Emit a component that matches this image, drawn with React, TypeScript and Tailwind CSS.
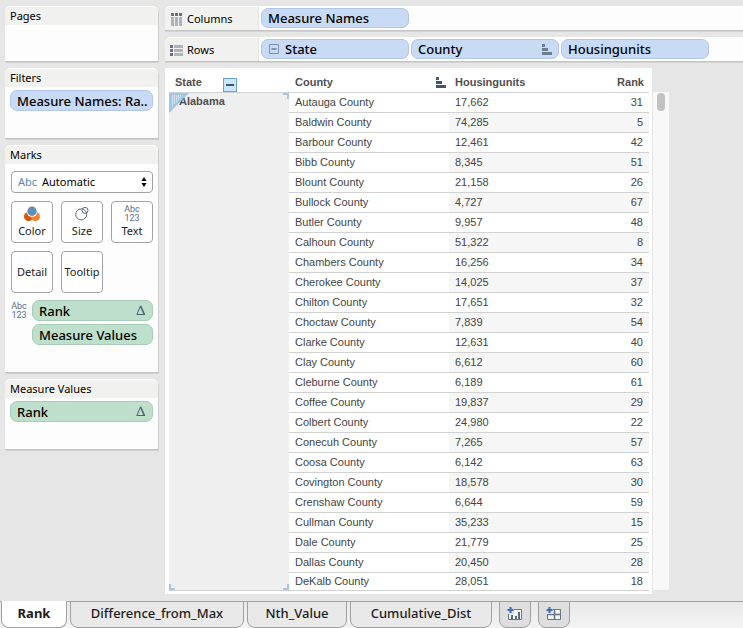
import React from "react";

const counties: [string, string, number][] = [
  ["Autauga County", "17,662", 31],
  ["Baldwin County", "74,285", 5],
  ["Barbour County", "12,461", 42],
  ["Bibb County", "8,345", 51],
  ["Blount County", "21,158", 26],
  ["Bullock County", "4,727", 67],
  ["Butler County", "9,957", 48],
  ["Calhoun County", "51,322", 8],
  ["Chambers County", "16,256", 34],
  ["Cherokee County", "14,025", 37],
  ["Chilton County", "17,651", 32],
  ["Choctaw County", "7,839", 54],
  ["Clarke County", "12,631", 40],
  ["Clay County", "6,612", 60],
  ["Cleburne County", "6,189", 61],
  ["Coffee County", "19,837", 29],
  ["Colbert County", "24,980", 22],
  ["Conecuh County", "7,265", 57],
  ["Coosa County", "6,142", 63],
  ["Covington County", "18,578", 30],
  ["Crenshaw County", "6,644", 59],
  ["Cullman County", "35,233", 15],
  ["Dale County", "21,779", 25],
  ["Dallas County", "20,450", 28],
  ["DeKalb County", "28,051", 18],
];

function SortIcon({ className }: { className: string }) {
  return (
    <svg width="10" height="11" viewBox="0 0 10 11" className={className} fill="currentColor" aria-hidden="true">
      <path d="M0 0h3v3H0zM0 4h6v3H0zM0 8h10v3H0z" />
    </svg>
  );
}

function Delta() {
  return (
    <svg width="10" height="11" viewBox="0 0 10 11" className="shrink-0 text-[#4f6076]" aria-hidden="true">
      <path d="M4.500 1 .8 9.500h8" fill="none" stroke="currentColor" strokeWidth="1" />
      <path d="M4.500 .8l4 9" stroke="currentColor" strokeWidth="1.600" />
    </svg>
  );
}

function Pill({ tone, className, children }: { tone: "blue" | "green"; className: string; children: React.ReactNode }) {
  const colors = tone === "blue" ? "bg-[#c8daf4] border-[#b0c7e8]" : "bg-[#bddfcb] border-[#a9ccb8]";
  return (
    <button
      type="button"
      className={`flex items-center rounded-[7px] border px-[6px] text-left text-[13px] font-medium leading-[18px] whitespace-nowrap text-black ${colors} ${className}`}
    >
      {children}
    </button>
  );
}

function Card({ title, className, children }: { title: string; className: string; children?: React.ReactNode }) {
  return (
    <section className={`rounded-t-[6px] border-b border-[#c4c4c4] bg-[#fdfdfd] shadow-[1px_1px_0_#cfcfcf] ${className}`}>
      <h2 className="h-[19px] rounded-t-[6px] border-t border-white bg-[#f1f1ef] px-[5px] text-[11px] leading-[18px] text-black">
        {title}
      </h2>
      {children}
    </section>
  );
}

function Shelf({ label, icon, children }: { label: string; icon: React.ReactNode; children: React.ReactNode }) {
  return (
    <section className="flex h-[25px] rounded-tl-[6px] border-b border-[#c4c4c4] bg-[#fdfdfd] shadow-[0_1px_0_#d4d4d4]">
      <h2 className="flex w-[94px] shrink-0 items-center gap-1 rounded-tl-[6px] border-t border-r border-t-white border-r-[#e4e4e2] bg-[#f1f1ef] pt-px pl-[5px] text-[11px] text-black">
        {icon}
        {label}
      </h2>
      <div className="flex min-w-0 items-center gap-[2px] pl-[2px]">{children}</div>
    </section>
  );
}

function MarkButton({ label, children }: { label: string; children?: React.ReactNode }) {
  return (
    <button
      type="button"
      className="flex h-[42px] w-[42px] flex-col items-center justify-center rounded-[4px] border border-[#a3a3a3] bg-white text-[11px] leading-[16px] text-[#222]"
    >
      {children}
      {label}
    </button>
  );
}

function Abc123() {
  return (
    <span className="flex w-4 flex-col items-center font-['Roboto',sans-serif] text-[9px] leading-[9px] text-[#5c6b82]">
      <span>Abc</span>
      <span>123</span>
    </span>
  );
}

const tabBase =
  "h-[27px] rounded-b-[8px] border border-[#a0a0a0] pb-[2px] text-[13px] leading-[23px] text-[#1c1c1c] whitespace-nowrap";

export default function App() {
  return (
    <div className="flex min-h-screen flex-col bg-[#e6e6e6] font-['Noto_Sans',sans-serif]">
      <div className="flex flex-1 gap-[7px] pt-[6px] pl-[5px]">
        <aside className="flex w-[153px] shrink-0 flex-col gap-[6px]">
          <Card title="Pages" className="h-14" />

          <Card title="Filters" className="h-[71px]">
            <div className="px-[5px] pt-[3px]">
              <Pill tone="blue" className="h-[21px] w-full">Measure Names: Ra..</Pill>
            </div>
          </Card>

          <Card title="Marks" className="h-[228px]">
            <div className="flex flex-col gap-2 pt-[7px] pr-[5px] pl-[6px]">
              <div className="relative flex">
                <select
                  aria-label="Mark type"
                  className="h-[22px] w-full appearance-none rounded-[4px] border border-[#a3a3a3] bg-white pl-[30px] text-[11px] leading-[20px] text-black"
                >
                  <option>Automatic</option>
                </select>
                <span className="pointer-events-none absolute inset-y-0 left-[7px] text-[11px] leading-[22px] text-[#5b87a8]">Abc</span>
                <svg width="6" height="10" viewBox="0 0 6 10" className="pointer-events-none absolute top-[6px] right-[6px]" aria-hidden="true">
                  <path d="M3 0l2.600 4H.4zM3 10L.4 6h5.200z" />
                </svg>
              </div>
              <div className="grid grid-cols-[42px_42px_42px] gap-2">
                <MarkButton label="Color">
                  <svg width="16" height="16" viewBox="0 0 16 16" className="mb-[1px]" aria-hidden="true">
                    <circle cx="4.600" cy="10.600" r="4.600" fill="#d4580f" />
                    <circle cx="11.400" cy="10.600" r="4.600" fill="#f58231" />
                    <circle cx="8" cy="5.200" r="5.600" fill="#fff" />
                    <circle cx="8" cy="5.200" r="4.700" fill="#5f8fb4" />
                  </svg>
                </MarkButton>
                <MarkButton label="Size">
                  <svg width="16" height="16" viewBox="0 0 16 16" className="mb-[1px]" fill="none" stroke="#596a82" aria-hidden="true">
                    <circle cx="7.200" cy="8.400" r="5.500" />
                    <circle cx="11" cy="4.400" r="3" />
                  </svg>
                </MarkButton>
                <MarkButton label="Text">
                  <Abc123 />
                </MarkButton>
                <MarkButton label="Detail" />
                <MarkButton label="Tooltip" />
              </div>
              <div className="-mt-px flex gap-[5px]">
                <span className="pt-[2px]"><Abc123 /></span>
                <div className="flex flex-1 flex-col gap-[3px]">
                  <Pill tone="green" className="h-[21px] w-full justify-between">Rank<Delta /></Pill>
                  <Pill tone="green" className="h-[21px] w-full">Measure Values</Pill>
                </div>
              </div>
            </div>
          </Card>

          <Card title="Measure Values" className="h-[71px]">
            <div className="px-[5px] pt-[3px]">
              <Pill tone="green" className="h-[21px] w-full justify-between">Rank<Delta /></Pill>
            </div>
          </Card>
        </aside>

        <main className="flex min-w-0 flex-1 flex-col gap-[6px]">
          <Shelf
            label="Columns"
            icon={
              <svg width="13" height="13" viewBox="0 0 13 13" aria-hidden="true">
                <path d="M1 0h3v3H1zM5 0h3v3H5zM9 0h3v3H9z" fill="#66727f" />
                <path d="M1 4h3v9H1zM5 4h3v9H5zM9 4h3v9H9z" fill="#adb3ba" />
              </svg>
            }
          >
            <Pill tone="blue" className="h-5 w-[148px]">Measure Names</Pill>
          </Shelf>
          <Shelf
            label="Rows"
            icon={
              <svg width="13" height="13" viewBox="0 0 13 13" aria-hidden="true">
                <path d="M0 1h3v3H0zM0 5h3v3H0zM0 9h3v3H0z" fill="#66727f" />
                <path d="M4 1h9v3H4zM4 5h9v3H4zM4 9h9v3H4z" fill="#adb3ba" />
              </svg>
            }
          >
            <Pill tone="blue" className="h-5 w-[148px] gap-[6px]">
              <svg width="10" height="10" viewBox="0 0 10 10" className="ml-[1px]" fill="none" aria-hidden="true">
                <path d="M.5.5h9v9h-9z" stroke="#7f93b0" />
                <path d="M2.500 5h5" stroke="#3f526c" />
              </svg>
              State
            </Pill>
            <Pill tone="blue" className="h-5 w-[148px] justify-between">
              County
              <SortIcon className="text-[#6f7f92]" />
            </Pill>
            <Pill tone="blue" className="h-5 w-[148px]">Housingunits</Pill>
          </Shelf>

          <div className="flex items-stretch font-['Liberation_Sans',Arial,sans-serif]">
            <div className="w-[487px] bg-white pr-[3px] pb-[3px] pl-1">
              <table className="w-full table-fixed border-separate border-spacing-0 text-[11px] text-[#444]">
                <colgroup>
                  <col className="w-[120px]" />
                  <col className="w-[160px]" />
                  <col className="w-[100px]" />
                  <col />
                </colgroup>
                <thead>
                  <tr className="h-[25px] text-left leading-[16px] text-[#505050]">
                    <th className="border-b border-[#d2d2d2] p-0 pl-[6px]">
                      <span className="flex items-center justify-between pt-[4px] pr-[52px]">
                        State
                        <button type="button" aria-label="Collapse State" className="mt-[4px] -mb-[1px] flex h-[14px] w-[14px] items-center justify-center border border-[#6f9ed8] bg-[#c9e8ff]">
                          <span className="h-[2px] w-2 bg-[#44546c]" />
                        </button>
                      </span>
                    </th>
                    <th className="border-b border-[#d2d2d2] p-0 pt-[4px] pr-[3px] pl-[6px]">
                      <span className="flex items-center justify-between">
                        County
                        <SortIcon className="text-[#44546c]" />
                      </span>
                    </th>
                    <th className="border-b border-[#d2d2d2] p-0 pt-[4px] pl-[6px]">Housingunits</th>
                    <th className="border-b border-[#d2d2d2] p-0 pt-[4px] pr-[5px] text-right">Rank</th>
                  </tr>
                </thead>
                <tbody>
                  {counties.map(([name, units, rank], i) => {
                    const last = i === counties.length - 1;
                    const cell = `border-b border-[#d2d2d2] p-0 ${last ? "h-[18px] leading-[17px]" : "h-5 leading-[19px]"}`;
                    const band = i % 2 === 1 ? "bg-[#f6f6f6]" : "";
                    return (
                      <tr key={name}>
                        {i === 0 && (
                          <th
                            rowSpan={counties.length}
                            scope="rowgroup"
                            className="relative border-b border-[#d2d2d2] bg-[#efefef] p-0 pl-[10px] text-left align-top leading-[17px] text-[#505050]"
                          >
                            Alabama
                            <svg width="20" height="20" viewBox="0 0 20 20" className="absolute top-0 left-0" aria-hidden="true">
                              <path d="M0 0h20L0 20z" fill="#a5c6e0" />
                              <path d="M3.500 2v11M5.500 2v9M7.500 2v7M9.500 2v5M11.500 2v3" stroke="#d3e4f3" strokeWidth="1" />
                            </svg>
                            <span className="absolute top-0 right-0 h-[6px] w-[6px] border-t-2 border-r-2 border-[#a5c6e0]" />
                            <span className="absolute bottom-0 left-0 h-[6px] w-[6px] border-b-2 border-l-2 border-[#a5c6e0]" />
                            <span className="absolute right-0 bottom-0 h-[6px] w-[6px] border-r-2 border-b-2 border-[#a5c6e0]" />
                          </th>
                        )}
                        <td className={`${cell} pl-[6px]`}>{name}</td>
                        <td className={`${cell} ${band} pl-[6px]`}>{units}</td>
                        <td className={`${cell} ${band} pr-[6px] text-right`}>{rank}</td>
                      </tr>
                    );
                  })}
                </tbody>
              </table>
            </div>
            <div className="mt-6 mb-1 ml-[1px] w-4 bg-[#f8f8f8] pt-[1px]">
              <div className="mx-auto h-[18px] w-2 rounded-full bg-[#c1c1c1]" />
            </div>
          </div>
        </main>
      </div>

      <nav aria-label="Sheets" className="flex h-[27px] border-t border-[#a0a0a0] bg-linear-to-b from-[#e9e9e9] to-[#f3f3f3] pl-[1px]">
        <div className="-mt-px flex gap-[3px]">
          <button type="button" className={`${tabBase} w-[66px] border-t-white bg-white font-bold`}>Rank</button>
          <button type="button" className={`${tabBase} w-[174px] bg-[#e9e9e9] font-medium`}>Difference_from_Max</button>
          <button type="button" className={`${tabBase} w-[100px] bg-[#e9e9e9] font-medium`}>Nth_Value</button>
          <button type="button" className={`${tabBase} w-[142px] bg-[#e9e9e9] font-medium`}>Cumulative_Dist</button>
        </div>
        <div className="-mt-px ml-[7px] flex gap-[7px]">
          <button type="button" aria-label="New worksheet" className={`${tabBase} flex w-8 items-center justify-center bg-[#dedede]`}>
            <svg width="16" height="14" viewBox="0 0 16 14" fill="none" aria-hidden="true">
              <path d="M1.500 2.500h13v10h-13z" stroke="#66758a" fill="#f4f4f4" />
              <path d="M4 8h2v4H4zM8 9h2v3H8zM11 5h2v7h-2z" fill="#5a6a80" />
              <path d="M0 0h7v7H0z" fill="#dedede" />
              <path d="M3.500 0v6M.5 3h6" stroke="#3d6cb0" strokeWidth="2" />
            </svg>
          </button>
          <button type="button" aria-label="New dashboard" className={`${tabBase} flex w-8 items-center justify-center bg-[#dedede]`}>
            <svg width="16" height="14" viewBox="0 0 16 14" fill="none" aria-hidden="true">
              <path d="M1.500 2.500h13v10h-13z" stroke="#66758a" fill="#f4f4f4" />
              <path d="M1.500 7.500h13M8.500 2.500v10" stroke="#66758a" strokeWidth="1.500" />
              <path d="M0 0h7v7H0z" fill="#dedede" />
              <path d="M3.500 0v6M.5 3h6" stroke="#3d6cb0" strokeWidth="2" />
            </svg>
          </button>
        </div>
      </nav>
    </div>
  );
}
